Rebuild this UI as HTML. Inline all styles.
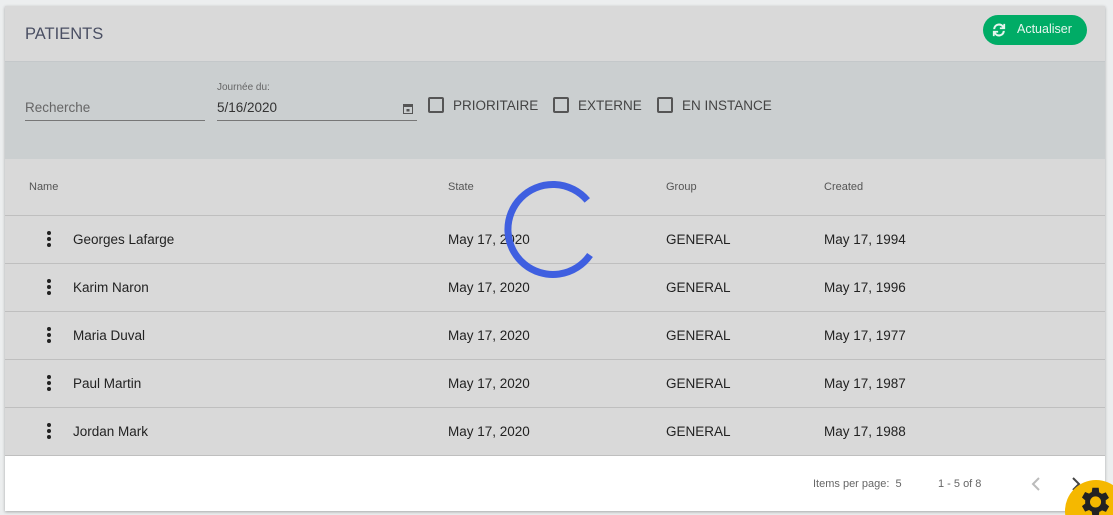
<!DOCTYPE html>
<html style="overflow:hidden;height:515px"><head><style>
body{margin:0;width:1113px;height:515px;background:#eceeef;font-family:"Liberation Sans",sans-serif;position:relative;overflow:hidden}
.card{position:absolute;left:5px;top:6px;width:1100px;height:505px;background:#d9d9d9;box-shadow:0 1px 3px rgba(0,0,0,.3)}
.hdr{height:55px;border-bottom:1px solid #c4c8ca;position:relative}
.hdr h1{margin:0;position:absolute;left:20px;top:19px;font-size:16.5px;font-weight:normal;color:#4a4f63}
.btn{position:absolute;left:978px;top:9px;width:104px;height:30px;border-radius:15px;background:#00ac66;color:#e6f5ee;font-size:12.5px}
.btn span{position:absolute;left:34px;top:7px}
.filt{height:97px;background:#cbcfd0;position:relative;color:#555}
.in{position:absolute;border-bottom:1px solid #777;font-size:13.5px}
.cb{position:absolute;top:35px;font-size:13.5px;color:#444}
.cb i{display:inline-block;width:12px;height:12px;border:2px solid #555;border-radius:2px;vertical-align:-3px;margin-right:9px}
.th{height:56px;border-bottom:1px solid #bfbfbf;position:relative;font-size:11px;color:#555}
.th span,.r span{position:absolute}
.th span{top:22px!important}
.r{height:47px;border-bottom:1px solid #bfbfbf;position:relative;font-size:13.5px;color:#222}
.r span{top:16px}
.dots{left:42px;top:15px!important;width:4px}
.dots b{display:block;width:4px;height:4px;border-radius:2px;background:#222;margin-bottom:2px}
.ft{position:absolute;left:0;top:450px;width:1100px;height:55px;background:#fff;font-size:11px;color:#666}
</style></head><body>
<div class="card">
<div class="hdr"><h1>PATIENTS</h1>
<div class="btn"><svg style="position:absolute;left:9px;top:8px" width="14" height="14" viewBox="0 0 16 16" fill="none" stroke="#e6f5ee" stroke-width="2.4"><path d="M2.5 7A5.5 5.5 0 0 1 13 5"/><path d="M13.5 9A5.5 5.5 0 0 1 3 11"/><path d="M14 1v5h-5" stroke-width="2"/><path d="M2 15v-5h5" stroke-width="2"/></svg><span>Actualiser</span></div></div>
<div class="filt">
<div class="in" style="left:20px;top:38px;width:180px;height:20px;color:#666">Recherche</div>
<div style="position:absolute;left:212px;top:20px;font-size:10px;color:#666">Journée du:</div>
<div class="in" style="left:212px;top:38px;width:200px;height:20px;color:#333">5/16/2020<svg style="position:absolute;right:4px;top:3px" width="10" height="11" viewBox="0 0 10 11"><rect x="0.5" y="1.5" width="9" height="9" fill="none" stroke="#555"/><rect x="0" y="1" width="10" height="3" fill="#555"/><rect x="3.5" y="6" width="3" height="2.5" fill="#555"/></svg></div>
<div class="cb" style="left:423px"><i></i>PRIORITAIRE</div>
<div class="cb" style="left:548px"><i></i>EXTERNE</div>
<div class="cb" style="left:652px"><i></i>EN INSTANCE</div>
</div>
<div class="th"><span style="left:24px">Name</span><span style="left:443px">State</span><span style="left:661px">Group</span><span style="left:819px">Created</span></div>
<div class="r"><span class="dots"><b></b><b></b><b></b></span><span style="left:68px">Georges Lafarge</span><span style="left:443px">May 17, 2020</span><span style="left:661px">GENERAL</span><span style="left:819px">May 17, 1994</span></div>
<div class="r"><span class="dots"><b></b><b></b><b></b></span><span style="left:68px">Karim Naron</span><span style="left:443px">May 17, 2020</span><span style="left:661px">GENERAL</span><span style="left:819px">May 17, 1996</span></div>
<div class="r"><span class="dots"><b></b><b></b><b></b></span><span style="left:68px">Maria Duval</span><span style="left:443px">May 17, 2020</span><span style="left:661px">GENERAL</span><span style="left:819px">May 17, 1977</span></div>
<div class="r"><span class="dots"><b></b><b></b><b></b></span><span style="left:68px">Paul Martin</span><span style="left:443px">May 17, 2020</span><span style="left:661px">GENERAL</span><span style="left:819px">May 17, 1987</span></div>
<div class="r"><span class="dots"><b></b><b></b><b></b></span><span style="left:68px">Jordan Mark</span><span style="left:443px">May 17, 2020</span><span style="left:661px">GENERAL</span><span style="left:819px">May 17, 1988</span></div>
<div class="ft"><span style="position:absolute;left:808px;top:22px">Items per page:&nbsp; 5</span><span style="position:absolute;left:933px;top:22px">1 - 5 of 8</span>
<svg style="position:absolute;left:1026px;top:20px" width="10" height="16"><path d="M8 2L2 8l6 6" fill="none" stroke="#bbb" stroke-width="2"/></svg>
<svg style="position:absolute;left:1066px;top:20px" width="10" height="16"><path d="M2 2l6 6-6 6" fill="none" stroke="#444" stroke-width="2"/></svg></div>
</div>
<svg style="position:absolute;left:500px;top:175px" width="110" height="110"><path d="M87.3 25.4A45 45 0 1 0 90 80" fill="none" stroke="#3f5fe0" stroke-width="7"/></svg>
<svg style="position:absolute;left:1060px;top:475px" width="53" height="40" viewBox="0 0 53 40"><circle cx="36" cy="36" r="31" fill="#f5b800"/><g transform="translate(15,8) scale(1.58)"><path fill="#222" d="M19.4 13a7.5 7.5 0 0 0 0-2l2.1-1.6-2-3.5-2.5 1a7 7 0 0 0-1.7-1L15 3h-4l-.4 2.7a7 7 0 0 0-1.7 1l-2.5-1-2 3.5L6.5 11a7.5 7.5 0 0 0 0 2l-2.1 1.6 2 3.5 2.5-1a7 7 0 0 0 1.7 1L11 21h4l.4-2.7a7 7 0 0 0 1.7-1l2.5 1 2-3.5zM13 15.5a3.5 3.5 0 1 1 0-7 3.5 3.5 0 0 1 0 7z"/></g></svg>
</body></html>
